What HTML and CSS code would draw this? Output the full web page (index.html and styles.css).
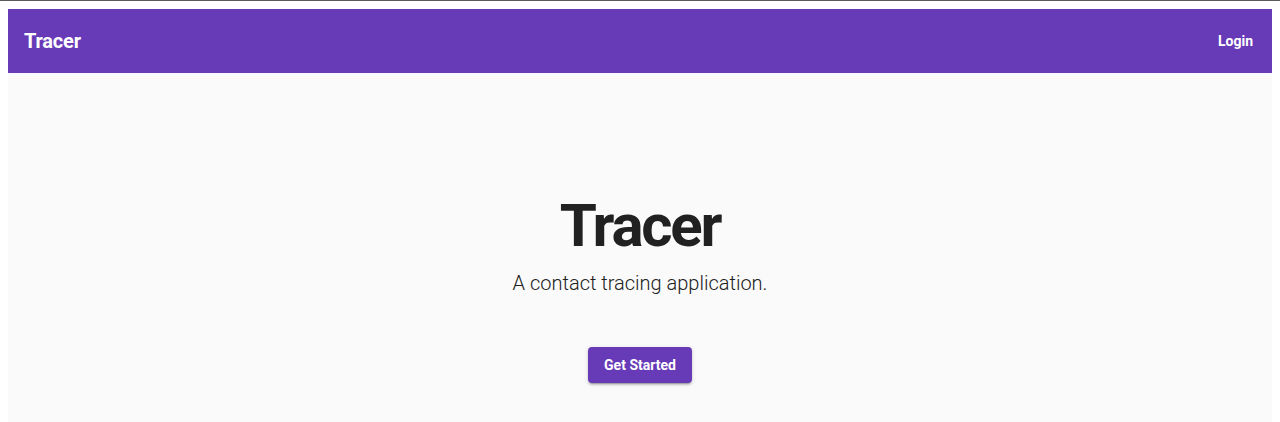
FILE: index.html
```html
<!DOCTYPE html>
<html lang="en">
<head>
<meta charset="utf-8">
<title>Tracer</title>
<link rel="stylesheet" href="styles.css">
</head>
<body>
<header class="appbar">
  <div class="brand">Tracer</div>
  <button class="login">Login</button>
</header>
<main class="hero">
  <h1 class="hero-title">Tracer</h1>
  <p class="hero-sub">A contact tracing application.</p>
  <button class="cta">Get Started</button>
</main>
</body>
</html>
```
FILE: styles.css
```css
html {
  border-top: 1px solid #5a5a5a;
  background: #ffffff;
}
body {
  margin: 8px;
  font-family: Roboto, "Helvetica Neue", Arial, sans-serif;
  color: rgba(0, 0, 0, 0.87);
}
.appbar {
  height: 64px;
  background: #673ab7;
  color: #ffffff;
  display: flex;
  align-items: center;
  justify-content: space-between;
  padding: 0 11px 0 16px;
}
.brand {
  font-size: 20px;
  font-weight: 700;
  line-height: 64px;
  letter-spacing: -0.2px;
}
.login {
  background: none;
  border: none;
  color: #ffffff;
  font-family: Roboto, sans-serif;
  font-size: 14px;
  font-weight: 700;
  padding: 6px 8px;
  line-height: 24px;
  cursor: pointer;
}
.hero {
  background: #fafafa;
  min-height: 360px;
  display: flex;
  flex-direction: column;
  align-items: center;
  padding-top: 117px;
  box-sizing: border-box;
}
.hero-title {
  margin: 0;
  font-size: 60px;
  font-weight: 700;
  line-height: 72px;
  color: #212121;
  letter-spacing: -2.2px;
}
.hero-sub {
  margin: 9px 0 0;
  font-size: 20px;
  font-weight: 300;
  line-height: 24px;
  color: #212121;
}
.cta {
  margin-top: 52px;
  height: 36px;
  padding: 0 16px;
  background: #673ab7;
  color: #ffffff;
  border: none;
  border-radius: 4px;
  font-family: Roboto, sans-serif;
  font-size: 14px;
  font-weight: 700;
  box-shadow: 0 3px 1px -2px rgba(0,0,0,.2), 0 2px 2px 0 rgba(0,0,0,.14), 0 1px 5px 0 rgba(0,0,0,.12);
  cursor: pointer;
}
```
